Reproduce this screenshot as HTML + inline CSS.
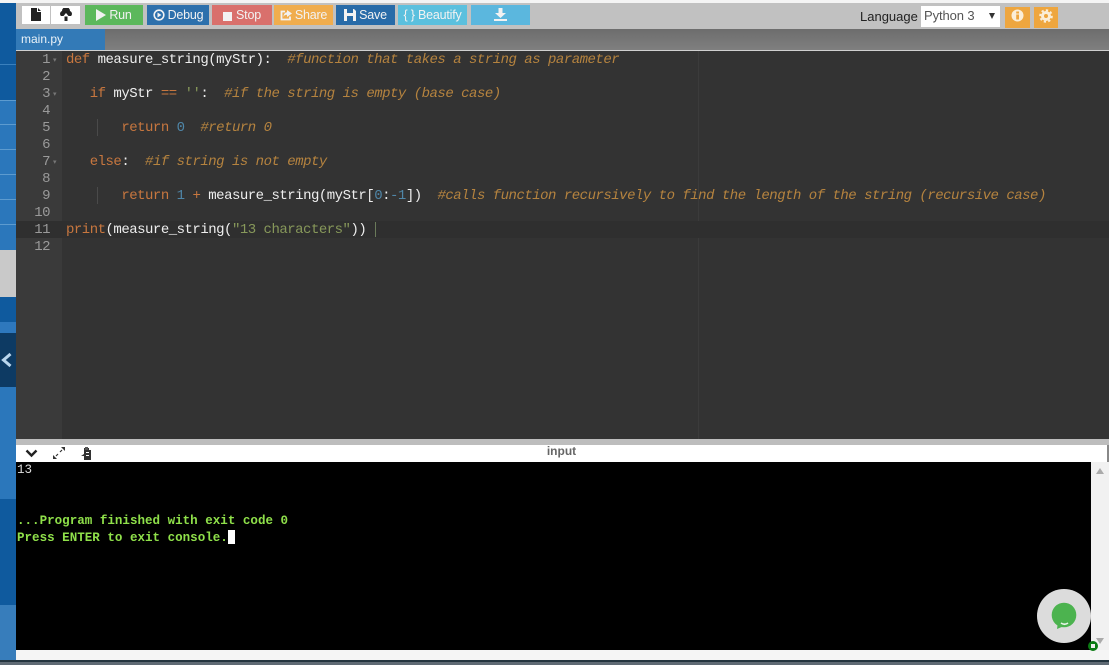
<!DOCTYPE html>
<html><head><meta charset="utf-8"><style>
html,body{margin:0;padding:0;width:1109px;height:665px;overflow:hidden;background:#f5f5f5;font-family:"Liberation Sans",sans-serif}
div,span.a{position:absolute}
.b{top:5px;height:20px;color:#f2f2f2;font-size:12.5px;line-height:20px;text-align:center;white-space:nowrap;letter-spacing:-.2px}
.b svg{vertical-align:-2px;margin-right:3px}
.l{left:66px;height:17px;font:14px/17px "Liberation Mono",monospace;letter-spacing:-.5px;white-space:pre;color:#eeeeee;margin-top:1px}
.n{left:16px;width:34px;text-align:right;font:14px/17px "Liberation Mono",monospace;letter-spacing:-.5px;color:#9a9a9a;margin-top:1px}
.k{color:#c8773f}.c{color:#b5833f;font-style:italic}.d{color:#4f86a8}.s{color:#87985a}
.f{left:53px;width:6px;height:17px;color:#777;font-size:7px;line-height:17px;margin-top:1px}
.t{left:17px;font:bold 12.55px/17px "Liberation Mono",monospace;color:#8fe04a;white-space:pre;margin-top:1px}
</style></head><body>
<div style="left:0;top:0;width:1109px;height:3px;background:#f4f4f4"></div>
<div style="left:16px;top:3px;width:1093px;height:26px;background:#c1c1c1"></div>
<!-- sidebar -->
<div style="left:0;top:3px;width:16px;height:657px;background:#0f5a9e"></div>
<div style="left:0;top:64px;width:16px;height:1px;background:#3a80bd"></div>
<div style="left:0;top:100px;width:16px;height:150px;background:#2b77bb"></div>
<div style="left:0;top:100px;width:16px;height:1px;background:#5d9bcf"></div>
<div style="left:0;top:124px;width:16px;height:1px;background:#5d9bcf"></div>
<div style="left:0;top:149px;width:16px;height:1px;background:#5d9bcf"></div>
<div style="left:0;top:174px;width:16px;height:1px;background:#5d9bcf"></div>
<div style="left:0;top:199px;width:16px;height:1px;background:#5d9bcf"></div>
<div style="left:0;top:224px;width:16px;height:1px;background:#5d9bcf"></div>
<div style="left:0;top:250px;width:16px;height:47px;background:#c9c9c9"></div>
<div style="left:0;top:322px;width:16px;height:11px;background:#2e78bd"></div>
<div style="left:0;top:333px;width:16px;height:54px;background:#0d3a63"></div>
<div style="left:0;top:387px;width:16px;height:112px;background:#2b77bb"></div>
<div style="left:0;top:605px;width:16px;height:55px;background:#377dbb"></div>
<svg style="position:absolute;left:0;top:350px" width="16" height="20"><path d="M10.500 4 L3.500 10 L10.500 16" fill="none" stroke="#b9d6ee" stroke-width="3"/></svg>
<!-- toolbar -->
<div style="left:22px;top:6px;width:28px;height:18px;background:#fff"></div>
<div style="left:51px;top:6px;width:29px;height:18px;background:#fff"></div>
<svg style="position:absolute;left:31px;top:8px" width="11" height="13"><path d="M0 0H6V4H10V13H0Z M7 0L10 3H7Z" fill="#222"/></svg>
<svg style="position:absolute;left:59px;top:8px" width="14" height="13"><path d="M2 8A3 3 0 0 1 3 3A4 4 0 0 1 11 3A3 3 0 0 1 12 8H9.500L7 5L4.500 8Z M5.500 8.500H8.500V13H5.500Z" fill="#222"/></svg>
<div class="b" style="left:85px;width:58px;background:#5cb85c"><svg width="10" height="12"><path d="M0 0L10 6L0 12Z" fill="#f2f2f2"/></svg>Run</div>
<div class="b" style="left:147px;width:62px;background:#2d70ac"><svg width="12" height="12"><circle cx="6" cy="6" r="4.8" fill="none" stroke="#f2f2f2" stroke-width="1.6"/><path d="M4.5 3.5L8.5 6L4.5 8.5Z" fill="#f2f2f2"/></svg>Debug</div>
<div class="b" style="left:212px;width:60px;background:#d9706c"><svg width="10" height="10"><rect width="9" height="9" y="1" fill="#f2f2f2"/></svg>Stop</div>
<div class="b" style="left:274px;width:59px;background:#f0ad4e"><svg width="12" height="12"><path d="M10 7.500V10.500H1.500V2.500H5" fill="none" stroke="#f2f2f2" stroke-width="1.800"/><path d="M7 1L12 4.500L7 8V5.800C5 5.800 4 6.500 3.500 8C3.500 5 5 3.400 7 3.200Z" fill="#f2f2f2"/></svg>Share</div>
<div class="b" style="left:336px;width:59px;background:#286ba8"><svg width="12" height="12"><path d="M0 0H10L12 2V12H0Z" fill="#f2f2f2"/><rect x="3" y="0" width="6" height="4" fill="#286ba8"/><rect x="3" y="7" width="6" height="5" fill="#286ba8"/></svg>Save</div>
<div class="b" style="left:398px;width:69px;background:#5bc0de">{ } Beautify</div>
<div class="b" style="left:471px;width:59px;background:#5bb7de"><svg style="margin:0" width="13" height="13"><path d="M4.500 0H8.500V5H12L6.500 10L1 5H4.500Z M0 11H13V13H0Z" fill="#f2f2f2"/></svg></div>
<div style="left:860px;top:7px;font-size:13px;line-height:19px;color:#222">Language</div>
<div style="left:921px;top:6px;width:79px;height:21px;background:#fff;color:#555;font-size:13px;line-height:20px;text-indent:3px;letter-spacing:-.1px">Python 3</div>
<div style="left:989px;top:13px;width:0;height:0;border:3.500px solid transparent;border-top:6px solid #333;border-bottom:0"></div>
<div style="left:1005px;top:7px;width:25px;height:21px;background:#eea63f"></div>
<div style="left:1034px;top:7px;width:24px;height:21px;background:#eea63f"></div>
<svg style="position:absolute;left:1011px;top:9px" width="13" height="13"><circle cx="6.500" cy="6.500" r="6" fill="#fbeed8"/><rect x="5.200" y="5.500" width="2.800" height="5" fill="#eea63f"/><rect x="5.200" y="2.500" width="2.800" height="2" fill="#eea63f"/></svg>
<svg style="position:absolute;left:1039px;top:9px" width="14" height="14"><circle cx="7" cy="7" r="3.500" fill="none" stroke="#fbeed8" stroke-width="3"/><circle cx="7" cy="7" r="5.800" fill="none" stroke="#fbeed8" stroke-width="2" stroke-dasharray="2.300 2.200"/></svg>
<!-- tab bar -->
<div style="left:16px;top:29px;width:1093px;height:21px;background:linear-gradient(#6d6d6d,#7f7f7f)"></div>
<div style="left:16px;top:29px;width:89px;height:21px;background:#337ab7;color:#eaf2f8;font-size:12px;line-height:20px;text-indent:5px">main.py</div>
<div style="left:16px;top:50px;width:1093px;height:1px;background:#d0d0d0"></div>
<!-- editor -->
<div style="left:16px;top:51px;width:1093px;height:388px;background:#333333"></div>
<div style="left:16px;top:51px;width:46px;height:388px;background:#3a3a3a"></div>
<div style="left:698px;top:51px;width:1px;height:388px;background:#3b3b3b"></div>
<div style="left:16px;top:221px;width:1093px;height:17px;background:#2f2f2f"></div>
<div style="left:97px;top:119px;width:1px;height:17px;background:#4a4a4a"></div>
<div style="left:97px;top:187px;width:1px;height:17px;background:#4a4a4a"></div>
<div style="left:375px;top:222px;width:1px;height:15px;background:#6a7a5a"></div>
<div class="n" style="top:51px">1</div><div class="f" style="top:51px">▾</div>
<div class="n" style="top:68px">2</div>
<div class="n" style="top:85px">3</div><div class="f" style="top:85px">▾</div>
<div class="n" style="top:102px">4</div>
<div class="n" style="top:119px">5</div>
<div class="n" style="top:136px">6</div>
<div class="n" style="top:153px">7</div><div class="f" style="top:153px">▾</div>
<div class="n" style="top:170px">8</div>
<div class="n" style="top:187px">9</div>
<div class="n" style="top:204px">10</div>
<div class="n" style="top:221px">11</div>
<div class="n" style="top:238px">12</div>
<div class="l" style="top:51px"><span class="k">def</span> measure_string(myStr):  <span class="c">#function that takes a string as parameter</span></div>
<div class="l" style="top:85px">   <span class="k">if</span> myStr <span class="k">==</span> <span class="s">''</span>:  <span class="c">#if the string is empty (base case)</span></div>
<div class="l" style="top:119px">       <span class="k">return</span> <span class="d">0</span>  <span class="c">#return 0</span></div>
<div class="l" style="top:153px">   <span class="k">else</span>:  <span class="c">#if string is not empty</span></div>
<div class="l" style="top:187px">       <span class="k">return</span> <span class="d">1</span> <span class="k">+</span> measure_string(myStr[<span class="d">0</span>:<span class="d">-1</span>])  <span class="c">#calls function recursively to find the length of the string (recursive case)</span></div>
<div class="l" style="top:221px"><span class="k">print</span>(measure_string(<span class="s">"13 characters"</span>))</div>
<!-- io bar -->
<div style="left:16px;top:439px;width:1093px;height:6px;background:#bdbdbd"></div>
<div style="left:16px;top:445px;width:1091px;height:17px;background:#fff"></div>
<div style="left:1107px;top:445px;width:2px;height:17px;background:#888"></div>
<div style="left:16px;top:444px;width:1091px;font-size:12px;line-height:15px;font-weight:bold;color:#666;text-align:center">input</div>
<svg style="position:absolute;left:25px;top:449px" width="13" height="9"><path d="M1.500 1.500L6.500 6.500L11.500 1.500" fill="none" stroke="#222" stroke-width="2.400"/></svg>
<svg style="position:absolute;left:52px;top:446px" width="14" height="14"><path d="M9 1H13V5ZM1 9V13H5Z" fill="#333"/><path d="M4 10L6 8M8 6L10 4" stroke="#333" stroke-width="1.200"/></svg>
<svg style="position:absolute;left:80px;top:447px" width="13" height="14"><path d="M4 1H9V3H11V13H4V9H1L4 7Z" fill="#333"/><rect x="5" y="0" width="3" height="3" fill="#555"/><rect x="6" y="5" width="3" height="1" fill="#fff"/><rect x="6" y="8" width="3" height="1" fill="#fff"/></svg>
<!-- terminal -->
<div style="left:16px;top:462px;width:1075px;height:188px;background:#000"></div>
<div style="left:1091px;top:462px;width:18px;height:188px;background:#f1f1f1"></div>
<div style="left:1096px;top:468px;width:0;height:0;border:4px solid transparent;border-bottom:6px solid #aaa;border-top:0"></div>
<div style="left:1096px;top:638px;width:0;height:0;border:4px solid transparent;border-top:6px solid #aaa;border-bottom:0"></div>
<div class="t" style="top:461px;color:#ddd;font-weight:normal">13</div>
<div class="t" style="top:512px">...Program finished with exit code 0</div>
<div class="t" style="top:529px">Press ENTER to exit console.</div>
<div style="left:228px;top:530px;width:7px;height:14px;background:#fff"></div>
<!-- chat -->
<div style="left:1037px;top:589px;width:54px;height:54px;border-radius:50%;background:#dcdcdc"></div>
<svg style="position:absolute;left:1050px;top:602px" width="28" height="28"><circle cx="14" cy="13" r="12.300" fill="#4cb34f"/><path d="M8 20L7 27L14 24Z" fill="#4cb34f"/><path d="M11 21Q14.500 23.500 18 21" fill="none" stroke="#e8f5e8" stroke-width="1.600"/></svg>
<div style="left:1088px;top:641px;width:10px;height:10px;border-radius:50%;background:#0a7a12"></div>
<div style="left:1091px;top:644px;width:4px;height:4px;background:#eee"></div>
<!-- bottom -->
<div style="left:0;top:660px;width:1109px;height:2px;background:#24353f"></div>
<div style="left:0;top:662px;width:1109px;height:3px;background:#5f6a74"></div>
</body></html>
